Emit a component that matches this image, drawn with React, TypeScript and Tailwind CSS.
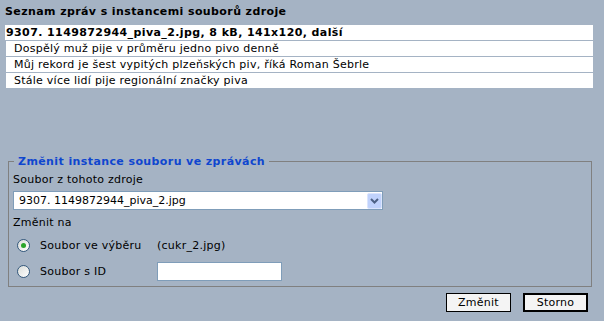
import React from "react";

const rows = [
  "Dospělý muž pije v průměru jedno pivo denně",
  "Můj rekord je šest vypitých plzeňských piv, říká Roman Šebrle",
  "Stále více lidí pije regionální značky piva",
];

function Radio({ checked }: { checked?: boolean }) {
  return (
    <span className="ml-[4px] flex h-[13px] w-[13px] items-center justify-center rounded-full border border-[#34597c] bg-gradient-to-br from-[#d9dcd9] to-[#ffffff]">
      {checked && <span className="h-[5px] w-[5px] rounded-full bg-[#2aa52a]" />}
    </span>
  );
}

export default function App() {
  return (
    <div className="h-[321px] w-[604px] overflow-hidden bg-[#a5b3c4] font-['DejaVu_Sans',sans-serif] text-[11px] leading-[13px] tracking-[0.25px] text-black">
      <div className="pl-[5px] pt-[5px] font-bold tracking-[0.4px]">Seznam zpráv s instancemi souborů zdroje</div>

      <div className="mt-[7px] ml-[5px] flex w-[588px] flex-col gap-[1px]">
        <div className="h-[15px] bg-white pl-[1px] font-bold leading-[15px] tracking-[0.4px]">
          9307. 1149872944_piva_2.jpg, 8 kB, 141x120, další
        </div>
        {rows.map((r) => (
          <div key={r} className="h-[15px] border-l border-[#a5b3c4] bg-white pl-[8px] leading-[15px]">
            {r}
          </div>
        ))}
      </div>

      <fieldset className="mt-[67px] ml-[8px] w-[584px] border border-[#808080] pb-[5px] pl-[4px]">
        <legend className="ml-[1px] px-[4px] font-bold tracking-[0.4px] text-[#0f46cf]">Změnit instance souboru ve zprávách</legend>
        <div className="mt-[5px]">Soubor z tohoto zdroje</div>
        <div className="mt-[5px] flex h-[19px] w-[370px] items-center justify-between border border-[#7f9db9] bg-white pl-[5px]">
          <span className="tracking-[0px]">9307. 1149872944_piva_2.jpg</span>
          <span className="flex h-[16px] w-[15px] items-center justify-center rounded-[2px] border border-[#dbe5fd] bg-[#c0d2fc]">
            <svg width="9" height="6" viewBox="0 0 9 6">
              <path d="M1 1 L4.5 4.5 L8 1" fill="none" stroke="#4d6185" strokeWidth="2" />
            </svg>
          </span>
        </div>
        <div className="mt-[6px]">Změnit na</div>
        <div className="mt-[7px] flex h-[18px] items-center">
          <Radio checked />
          <span className="ml-[10px] w-[117px]">Soubor ve výběru</span>
          <span>(cukr_2.jpg)</span>
        </div>
        <div className="mt-[8px] flex h-[19px] items-center">
          <Radio />
          <span className="ml-[10px] w-[117px]">Soubor s ID</span>
          <span className="h-[19px] w-[125px] border border-[#7f9db9] bg-white" />
        </div>
      </fieldset>

      <div className="mt-[6px] flex justify-end gap-[12px] pr-[16px]">
        <button className="h-[19px] w-[65px] border border-black bg-[#f4f4f4] text-center font-normal">Změnit</button>
        <button className="h-[19px] w-[65px] border-2 border-black bg-[#f4f4f4] text-center font-normal">Storno</button>
      </div>
    </div>
  );
}
